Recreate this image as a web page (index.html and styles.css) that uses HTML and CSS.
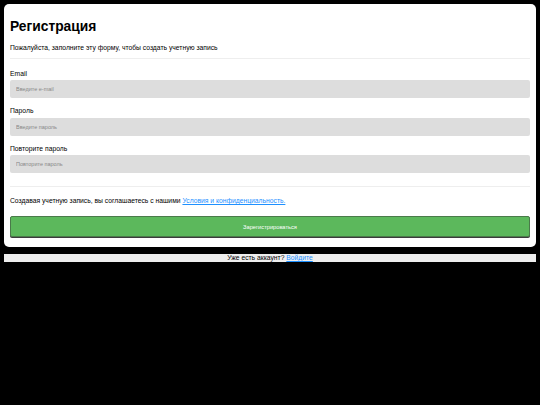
FILE: index.html
```html
<!DOCTYPE html>
<html lang="ru">
<head>
<meta charset="utf-8">
<link rel="stylesheet" href="styles.css">
</head>
<body>
<form class="card">
  <h1 class="title">Регистрация</h1>
  <p class="subtitle">Пожалуйста, заполните эту форму, чтобы создать учетную запись</p>
  <hr class="rule">
  <label class="label label-first" for="email">Email</label>
  <input class="field" id="email" type="text" placeholder="Введите e-mail">
  <label class="label" for="psw">Пароль</label>
  <input class="field" id="psw" type="password" placeholder="Введите пароль">
  <label class="label" for="psw2">Повторите пароль</label>
  <input class="field" id="psw2" type="password" placeholder="Повторите пароль">
  <hr class="rule rule-bottom">
  <p class="terms">Создавая учетную запись, вы соглашаетесь с нашими <a class="link" href="#">Условия и конфиденциальность.</a></p>
  <button class="btn" type="button">Зарегистрироваться</button>
</form>
<div class="signin">Уже есть аккаунт? <a class="link" href="#">Войдите</a></div>
</body>
</html>
```

FILE: styles.css
```css
html, body {
  margin: 0;
  background: #000;
}
body {
  padding: 4px;
  font-family: "Liberation Sans", Arial, sans-serif;
  color: #000;
}
.card {
  display: flex;
  flex-direction: column;
  background: #fff;
  border-radius: 5px;
  padding: 15px 6px 10px 6px;
}
.title {
  margin: 0;
  font-size: 13.8px;
  line-height: 16px;
  font-weight: bold;
}
.subtitle {
  margin: 8px 0 0 0;
  font-size: 6.75px;
  line-height: 9px;
}
.rule {
  width: 100%;
  margin: 6px 0 0 0;
  border: 0;
  border-top: 1px solid #eee;
  height: 0;
}
.label {
  margin-top: 8px;
  font-size: 6.75px;
  line-height: 9px;
}
.label-first {
  margin-top: 9.5px;
}
.label + .field {
  margin-top: 2.5px;
}
.field {
  box-sizing: border-box;
  width: 100%;
  height: 18px;
  border: 0;
  border-radius: 2px;
  background: #dddddd;
  padding: 0 6px;
  font-family: "Liberation Sans", Arial, sans-serif;
  font-size: 5.5px;
  outline: none;
}
.field::placeholder {
  color: #888;
}
.rule-bottom {
  margin-top: 13px;
}
.terms {
  margin: 9px 0 0 0;
  font-size: 6.75px;
  line-height: 9px;
}
.link {
  color: #1e90ff;
  text-decoration: underline;
}
.btn {
  margin-top: 11px;
  box-sizing: border-box;
  width: 100%;
  height: 21px;
  background: #5cb85c;
  color: #fff;
  border: 1px solid #4a7a4a;
  border-radius: 2px;
  box-shadow: 0 1px 0 #3c3c3c;
  font-family: "Liberation Sans", Arial, sans-serif;
  font-size: 5.7px;
  padding: 0;
}
.signin {
  margin-top: 7px;
  background: #eeeeee;
  text-align: center;
  font-size: 6.75px;
  line-height: 8px;
}
```
